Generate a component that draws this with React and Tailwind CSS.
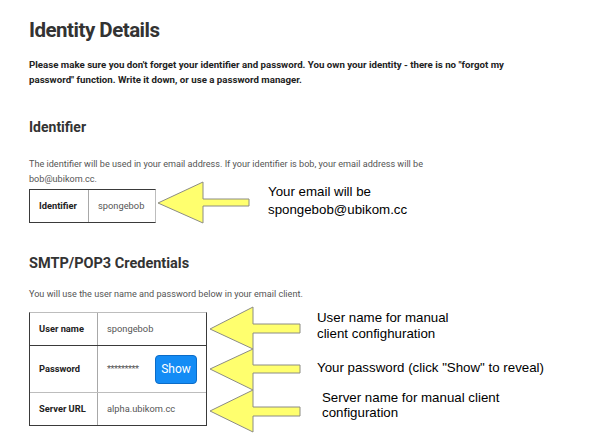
import React from "react";

function Arrow({ tipY, headTop, headBottom, shaftTop, shaftBottom, tipX = 3, baseX = 46, endX = 93 }) {
  const pts = [
    [tipX, tipY],
    [baseX, headTop],
    [baseX, shaftTop],
    [endX, shaftTop],
    [endX, shaftBottom],
    [baseX, shaftBottom],
    [baseX, headBottom],
  ]
    .map((p) => p.join(","))
    .join(" ");
  return <polygon points={pts} fill="#ffff6e" stroke="#8c8c84" strokeWidth="1" strokeLinejoin="miter" />;
}

export default function App() {
  return (
    <div className="w-[600px] h-[448px] bg-white overflow-hidden pl-[29px] pt-[18px] font-['Roboto',sans-serif] text-[#333]">
      <h1 className="text-[20.5px] leading-[24px] font-bold text-[#333] tracking-[-0.5px]">Identity Details</h1>
      <p className="mt-[15px] w-[500px] text-[9.7px] leading-[15px] font-bold text-[#222]">
        Please make sure you don't forget your identifier and password. You own your identity - there is no "forgot my
        password" function. Write it down, or use a password manager.
      </p>

      {/* identifier */}
      <h2 className="mt-[31px] text-[14px] leading-[18px] font-bold text-[#333]">Identifier</h2>
      <p className="mt-[21px] w-[430px] text-[9.1px] leading-[15px] text-[#555]">
        The identifier will be used in your email address. If your identifier is bob, your email address will be
        bob@ubikom.cc.
      </p>
      <div className="mt-[2px] flex items-start">
        <div className="flex h-[34px] border border-[#3a3a3a] border-r-[#bdbdbd] text-[9.3px]">
          <div className="w-[59px] flex items-center pl-[9px] font-bold text-[#222] border-r border-[#a8a8a8]">Identifier</div>
          <div className="w-[66px] flex items-center pl-[9px] text-[#555]">spongebob</div>
        </div>
        <svg width="96" height="46" className="-mt-[8px] overflow-visible shrink-0">
          <Arrow tipX={2} tipY={22} headTop={1} headBottom={42} shaftTop={18} shaftBottom={25} baseX={47} endX={93} />
        </svg>
        <div className="ml-[16px] -mt-[6px] text-[13.3px] leading-[17.6px] text-black font-['Liberation_Sans',Arial,sans-serif]">
          Your email will be
          <br />
          spongebob@ubikom.cc
        </div>
      </div>

      {/* smtp */}
      <h2 className="mt-[28px] text-[14.5px] leading-[18px] font-bold text-[#333]">SMTP/POP3 Credentials</h2>
      <p className="mt-[14px] text-[9.1px] leading-[15px] text-[#555]">
        You will use the user name and password below in your email client.
      </p>
      <div className="mt-[10px] flex items-start">
        <div className="w-[178px] border border-[#3a3a3a] border-t-[#bdbdbd] text-[9.3px]">
          <div className="flex h-[33px] border-b border-[#3a3a3a]">
            <div className="w-[68px] flex items-center pl-[9px] font-bold text-[#222] border-r border-[#a8a8a8]">User name</div>
            <div className="flex-1 flex items-center pl-[9px] text-[#555]">spongebob</div>
          </div>
          <div className="flex h-[47px] border-b border-[#bdbdbd]">
            <div className="w-[68px] flex items-center pl-[9px] font-bold text-[#222] border-r border-[#a8a8a8]">Password</div>
            <div className="flex-1 flex items-center pl-[9px] pr-[9px] justify-between text-[#555]">
              <span className="tracking-[-0.5px]">*********</span>
              <button className="w-[42px] h-[29px] rounded-[4px] bg-[#148cf5] border border-[#0b6cc8] text-white text-[12px] leading-none font-['Roboto',sans-serif]">
                Show
              </button>
            </div>
          </div>
          <div className="flex h-[32px]">
            <div className="w-[68px] flex items-center pl-[9px] font-bold text-[#222] border-r border-[#a8a8a8]">Server URL</div>
            <div className="flex-1 flex items-center pl-[9px] text-[#555]">alpha.ubikom.cc</div>
          </div>
        </div>
        <svg width="96" height="130" className="-mt-[7px] overflow-visible shrink-0">
          <Arrow tipY={24} headTop={2} headBottom={44} shaftTop={19} shaftBottom={28} />
          <Arrow tipY={64} headTop={44} headBottom={85} shaftTop={60} shaftBottom={68} />
          <Arrow tipY={106} headTop={85} headBottom={127} shaftTop={102} shaftBottom={111} />
        </svg>
        <div className="ml-[14px] -mt-[2px] flex flex-col text-[13.3px] text-black font-['Liberation_Sans',Arial,sans-serif]">
          <div className="leading-[16px]">
            User name for manual
            <br />
            client confighuration
          </div>
          <div className="mt-[18px] leading-[16px]">Your password (click "Show" to reveal)</div>
          <div className="mt-[14px] ml-[5px] leading-[15px]">
            Server name for manual client
            <br />
            configuration
          </div>
        </div>
      </div>
    </div>
  );
}
